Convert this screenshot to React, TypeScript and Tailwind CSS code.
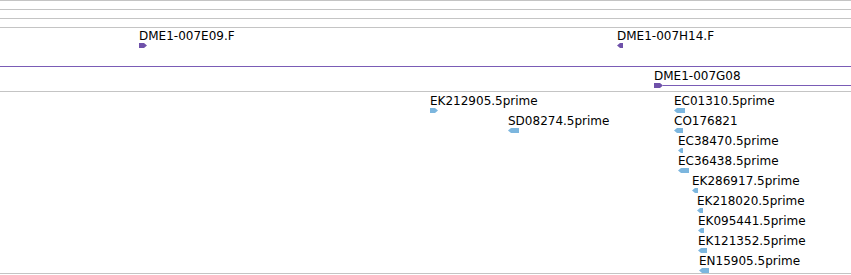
import React from 'react';

type Dir = 'left' | 'right';

interface Feature {
  label: string;
  x: number;
  top: number;
  w: number;
  dir: Dir;
}

const PURPLE = '#6f51aa';
const BLUE = '#7cb6de';

const TRACK_A: Feature[] = [
  { label: 'DME1-007E09.F', x: 139, top: 1, w: 8, dir: 'right' },
  { label: 'DME1-007H14.F', x: 617, top: 1, w: 6, dir: 'left' },
];

const ESTS: Feature[] = [
  { label: 'EK212905.5prime', x: 430, top: 2, w: 8, dir: 'right' },
  { label: 'SD08274.5prime', x: 508, top: 22, w: 11, dir: 'left' },
  { label: 'EC01310.5prime', x: 674, top: 2, w: 11, dir: 'left' },
  { label: 'CO176821', x: 674, top: 22, w: 9, dir: 'left' },
  { label: 'EC38470.5prime', x: 678, top: 42, w: 5, dir: 'left' },
  { label: 'EC36438.5prime', x: 678, top: 62, w: 11, dir: 'left' },
  { label: 'EK286917.5prime', x: 692, top: 82, w: 6, dir: 'left' },
  { label: 'EK218020.5prime', x: 697, top: 102, w: 6, dir: 'left' },
  { label: 'EK095441.5prime', x: 698, top: 122, w: 6, dir: 'left' },
  { label: 'EK121352.5prime', x: 698, top: 142, w: 9, dir: 'left' },
  { label: 'EN15905.5prime', x: 699, top: 162, w: 10, dir: 'left' },
];

function Arrow({ w, dir, color }: { w: number; dir: Dir; color: string }) {
  const tip = Math.min(3, w - 2);
  const pts =
    dir === 'right'
      ? `0,0 ${w - tip},0 ${w},2.5 ${w - tip},5 0,5`
      : `0,2.5 ${tip},0 ${w},0 ${w},5 ${tip},5`;
  return (
    <svg width={w} height={5} viewBox={`0 0 ${w} 5`} className="block">
      <polygon points={pts} fill={color} />
    </svg>
  );
}

function Glyph({ f, color }: { f: Feature; color: string }) {
  return (
    <div className="absolute flex flex-col" style={{ left: f.x, top: f.top }}>
      <span className="whitespace-nowrap text-[12px] leading-[14px] text-black">{f.label}</span>
      <Arrow w={f.w} dir={f.dir} color={color} />
    </div>
  );
}

export default function App() {
  return (
    <div
      className="h-[275px] w-[851px] overflow-hidden bg-white"
      style={{ fontFamily: '"DejaVu Sans", Verdana, sans-serif' }}
    >
      <div className="h-[9px] border-t border-[#c4c4c4]" />
      <div className="h-[9px] border-t border-[#c4c4c4]" />
      <div className="h-[9px] border-t border-[#c4c4c4]" />

      <div className="relative h-[39px] border-t border-[#c4c4c4]">
        {TRACK_A.map((f) => (
          <Glyph key={f.label} f={f} color={PURPLE} />
        ))}
      </div>

      <div className="relative h-[25px] border-t border-[#7a5cb6]">
        <div className="absolute left-[654px] right-0 top-[2px] flex flex-col">
          <span className="whitespace-nowrap text-[12px] leading-[14px] text-black">DME1-007G08</span>
          <div className="flex items-center">
            <Arrow w={9} dir="right" color={PURPLE} />
            <div className="h-px flex-1 bg-[#7a5cb6]" />
          </div>
        </div>
      </div>

      <div className="relative h-[182px] border-t border-[#c4c4c4]">
        {ESTS.map((f) => (
          <Glyph key={f.label} f={f} color={BLUE} />
        ))}
      </div>

      <div className="h-[2px] border-t border-[#c4c4c4]" />
    </div>
  );
}
